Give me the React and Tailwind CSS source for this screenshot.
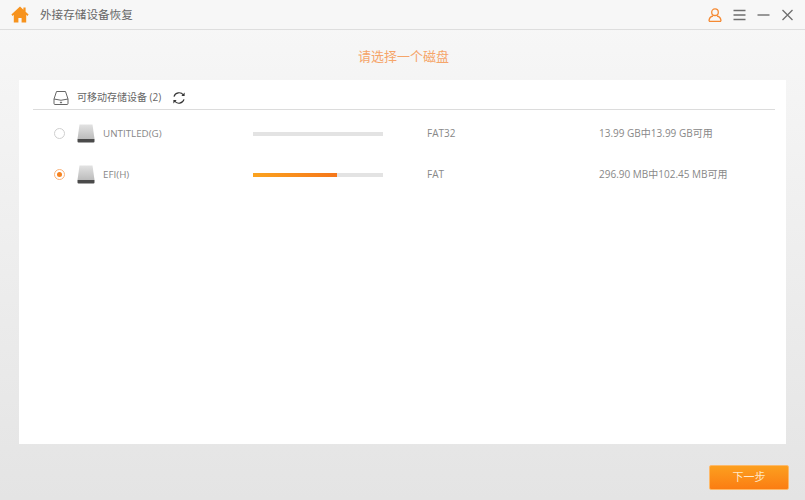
const cjk = { fontFamily: '"Open Sans", "Noto Sans CJK SC", sans-serif' };

const HomeIcon = () => (
  <svg width="18" height="17" viewBox="0 0 18 17" fill="#f7931e">
    <path d="M9 0.5 L0.4 8.6 L1.6 9.9 L2.8 8.8 L2.8 16.5 L7.4 16.5 L7.4 12 L10.6 12 L10.6 16.5 L15.2 16.5 L15.2 8.8 L16.4 9.9 L17.6 8.6 L14.6 5.8 L14.6 1.6 L12.4 1.6 L12.4 3.7 Z" />
  </svg>
);

const TitleIcons = () => (
  <div className="flex items-center gap-[11px] pr-[5px]">
    <svg width="14" height="14" viewBox="0 0 14 14" fill="none" stroke="#f58a33" strokeWidth="1.3">
      <circle cx="7" cy="4.2" r="3.3" />
      <path d="M1 13.3 C1 9.9 3.4 8.4 5 8 M13 13.3 C13 9.9 10.6 8.4 9 8 M1 13.3 H13" />
    </svg>
    <svg width="13" height="14" viewBox="0 0 13 14" stroke="#6f6f6f" strokeWidth="1.4">
      <path d="M0.5 2.5 H12.5 M0.5 7 H12.5 M0.5 11.5 H12.5" />
    </svg>
    <svg width="13" height="14" viewBox="0 0 13 14" stroke="#6f6f6f" strokeWidth="1.4">
      <path d="M0.5 7 H12.5" />
    </svg>
    <svg width="13" height="14" viewBox="0 0 13 14" stroke="#6f6f6f" strokeWidth="1.3">
      <path d="M1.5 2 L11.5 12 M11.5 2 L1.5 12" />
    </svg>
  </div>
);

const DriveOutline = () => (
  <svg width="16" height="16" viewBox="0 0 16 16" fill="none" stroke="#666" strokeWidth="1">
    <path d="M3.5 1.5 H12.5 L15 9 V13.5 Q15 14.5 14 14.5 H2 Q1 14.5 1 13.5 V9 Z" />
    <path d="M1 9 Q8 11.5 15 9" />
    <circle cx="8" cy="12.5" r="0.6" fill="#666" />
  </svg>
);

const Refresh = () => (
  <svg width="14" height="14" viewBox="0 0 14 14" fill="none" stroke="#333" strokeWidth="1.2">
    <path d="M2 5.6 A5.3 5.3 0 0 1 11.4 4" />
    <path d="M12 8.4 A5.3 5.3 0 0 1 2.6 10" />
    <path d="M12.6 1.6 V5 H9.4 Z" fill="#333" stroke="none" />
    <path d="M1.4 12.4 V9 H4.6 Z" fill="#333" stroke="none" />
  </svg>
);

const DiskIcon = () => (
  <svg width="18" height="19" viewBox="0 0 18 19">
    <defs>
      <linearGradient id="disk" x1="0" y1="0" x2="0" y2="1">
        <stop offset="0" stopColor="#e2e2e2" />
        <stop offset="1" stopColor="#bcbcbc" />
      </linearGradient>
    </defs>
    <path d="M2.5 0.5 H15.5 L17.5 15 H0.5 Z" fill="url(#disk)" />
    <path d="M0.5 15 H17.5 V17.5 Q17.5 18.5 16.5 18.5 H1.5 Q0.5 18.5 0.5 17.5 Z" fill="#4a4a4a" />
  </svg>
);

const Radio = ({ on }) => (
  <div className={`flex h-[11px] w-[11px] shrink-0 items-center justify-center rounded-full border ${on ? 'border-[#f9b27a]' : 'border-[#cfcfcf]'}`}>
    {on && <div className="h-[5px] w-[5px] rounded-full bg-[#f58220]" />}
  </div>
);

const Row = ({ on, name, used, fs, size }) => (
  <div className="flex h-[41px] items-center text-[10px] text-[#888]">
    <div className="ml-[35px]"><Radio on={on} /></div>
    <div className="ml-[12px] flex"><DiskIcon /></div>
    <div className="ml-[8px] w-[150px] pt-[1px] text-[9.8px]">{name}</div>
    <div className="h-[4px] w-[130px] bg-[#e3e3e3]">
      {used > 0 && <div className="h-full bg-gradient-to-r from-[#fba31f] to-[#f5761a]" style={{ width: `${used}%` }} />}
    </div>
    <div className="ml-[44px] w-[172px]">{fs}</div>
    <div>{size}</div>
  </div>
);

export default function App() {
  return (
    <div className="flex h-[500px] w-[805px] flex-col overflow-hidden bg-gradient-to-b from-[#f8f8f8] to-[#e4e4e4]" style={cjk}>
      <div className="flex h-[30px] shrink-0 items-center justify-between border-b border-[#dedede] bg-[#f7f7f7] pl-[11px] pr-[6px]">
        <div className="flex items-center gap-[11px]">
          <HomeIcon />
          <span className="text-[11.6px] text-[#666]">外接存储设备恢复</span>
        </div>
        <TitleIcons />
      </div>

      <div className="flex h-[50px] shrink-0 items-center justify-center pl-[2px] pt-[1px] text-[13px] text-[#f5a56a]" style={{ fontFamily: '"Noto Sans CJK SC", sans-serif' }}>
        请选择一个磁盘
      </div>

      <div className="mx-[19px] h-[364px] shrink-0 bg-white">
        <div className="ml-[14px] mr-[11px] flex h-[30px] items-center border-b border-[#dcdcdc] pl-[20px] pt-[6px] text-[10px] text-[#666]">
          <DriveOutline />
          <span className="ml-[8px]">可移动存储设备 (2)</span>
          <span className="ml-[11px] flex"><Refresh /></span>
        </div>
        <div className="pt-[3px]">
          <Row name="UNTITLED(G)" used={0} fs="FAT32" size="13.99 GB中13.99 GB可用" />
          <Row on name="EFI(H)" used={64.5} fs="FAT" size="296.90 MB中102.45 MB可用" />
        </div>
      </div>

      <div className="flex flex-1 items-center justify-end pr-[16px] pt-[11px]">
        <button className="h-[25px] w-[80px] rounded-[2px] border border-[#fdb96a] bg-gradient-to-b from-[#fc9f1f] to-[#fb7d12] text-[11px] text-[#ffe9c9]">
          下一步
        </button>
      </div>
    </div>
  );
}
